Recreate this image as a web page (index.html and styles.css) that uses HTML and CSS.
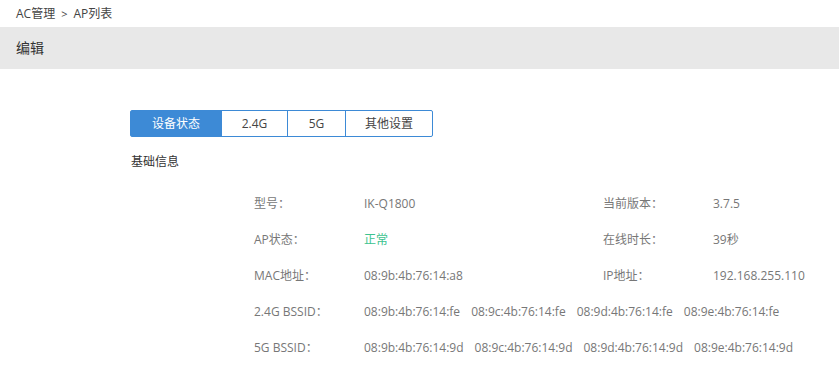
FILE: index.html
```html
<!DOCTYPE html>
<html lang="zh-CN">
<head>
    <meta charset="UTF-8">
    <meta name="viewport" content="width=device-width, initial-scale=1.0">
    <title>AP列表 - 编辑</title>
    <link rel="stylesheet" href="styles.css">
</head>
<body>
    <!-- Breadcrumb -->
    <div class="breadcrumb">AC管理<span class="sep">&gt;</span>AP列表</div>
    <div class="page-header">编辑</div>

    <div class="content">
        <!-- Tabs -->
        <div class="tabs">
            <div class="tab active">设备状态</div>
            <div class="tab tab-24">2.4G</div>
            <div class="tab tab-5">5G</div>
            <div class="tab tab-other">其他设置</div>
        </div>

        <h3 class="section-title">基础信息</h3>

        <div class="info">
            <div class="info-row">
                <span class="label">型号：</span>
                <span class="value">IK-Q1800</span>
                <span class="label">当前版本：</span>
                <span class="value-last">3.7.5</span>
            </div>
            <div class="info-row">
                <span class="label">AP状态：</span>
                <span class="value status-ok">正常</span>
                <span class="label">在线时长：</span>
                <span class="value-last">39秒</span>
            </div>
            <div class="info-row">
                <span class="label">MAC地址：</span>
                <span class="value">08:9b:4b:76:14:a8</span>
                <span class="label">IP地址：</span>
                <span class="value-last">192.168.255.110</span>
            </div>
            <div class="info-row">
                <span class="label">2.4G BSSID：</span>
                <span class="value-list">
                    <span>08:9b:4b:76:14:fe</span>
                    <span>08:9c:4b:76:14:fe</span>
                    <span>08:9d:4b:76:14:fe</span>
                    <span>08:9e:4b:76:14:fe</span>
                </span>
            </div>
            <div class="info-row">
                <span class="label">5G BSSID：</span>
                <span class="value-list">
                    <span>08:9b:4b:76:14:9d</span>
                    <span>08:9c:4b:76:14:9d</span>
                    <span>08:9d:4b:76:14:9d</span>
                    <span>08:9e:4b:76:14:9d</span>
                </span>
            </div>
        </div>
    </div>
</body>
</html>
```

FILE: styles.css
```css
body {
    font-family: "Open Sans", "Noto Sans CJK SC", sans-serif;
    font-size: 12px;
    color: #333;
    margin: 0;
    padding: 0;
    background: #fff;
}
.breadcrumb {
    height: 27px;
    line-height: 27px;
    padding-left: 16px;
    color: #444;
}
.breadcrumb .sep {
    margin: 0 6px;
    font-size: 11px;
}
.page-header {
    height: 42px;
    line-height: 42px;
    padding-left: 16px;
    font-size: 14px;
    background: #e8e8e8;
    color: #333;
}
.content {
    padding: 41px 0 0 130px;
}
.tabs {
    display: flex;
    width: 303px;
    height: 27px;
    box-sizing: border-box;
    border: 1px solid #3d8ad6;
    border-radius: 2px;
}
.tab {
    line-height: 25px;
    text-align: center;
    color: #444;
    border-left: 1px solid #3d8ad6;
}
.tab.active {
    width: 90px;
    border-left: none;
    background: #3d8ad6;
    color: #fff;
}
.tab-24 {
    width: 65px;
}
.tab-5 {
    width: 57px;
}
.tab-other {
    flex: 1;
}
.section-title {
    margin: 15px 0 13px 1px;
    font-size: 12px;
    font-weight: normal;
    line-height: 20px;
    color: #333;
}
.info {
    padding-left: 124px;
}
.info-row {
    display: flex;
    height: 36px;
    align-items: center;
    color: #777;
}
.label {
    flex: none;
    width: 110px;
}
.value {
    flex: none;
    width: 239px;
}
.value-last {
    flex: none;
}
.status-ok {
    color: #3cc38f;
}
.value-list {
    display: flex;
    gap: 11px;
    white-space: nowrap;
}
```
